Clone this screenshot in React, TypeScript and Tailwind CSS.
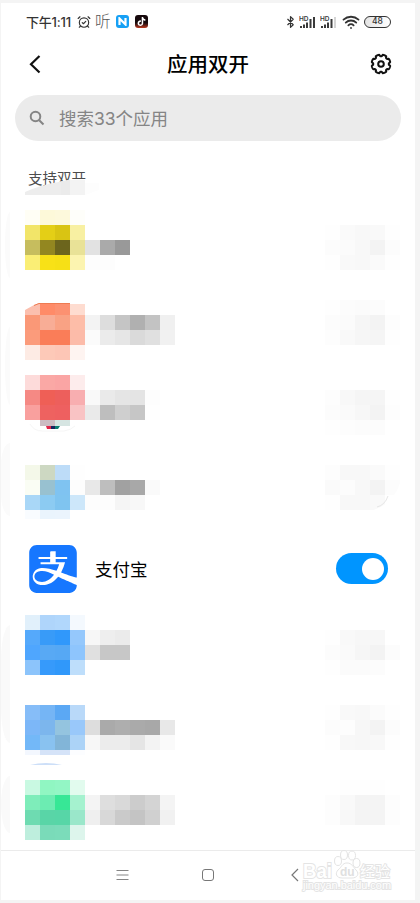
import { AlarmClockCheck, Bluetooth, Wifi } from 'lucide-react';
import { SiAlipay, SiTiktok } from 'react-icons/si';
import clsx from 'clsx';

interface AppRow {
  id: string;
  height: string;
  // one string per 15px band, one class per cell
  cells: string[];
  side: string[];
}

const NONE = 'bg-transparent bg-transparent bg-transparent bg-transparent bg-transparent';

const rowsBefore: AppRow[] = [
  {
    id: 'a',
    height: 'h-[90px]',
    cells: [
      'bg-[#fffef5] bg-[#fdf9d9] bg-[#fdf9dc] bg-[#fefefa]',
      'bg-[#f2e569] bg-[#e4cf16] bg-[#d9c413] bg-[#f8f0a2]',
      'bg-[#c6bd5e] bg-[#938720] bg-[#6c651d] bg-[#e9e297] bg-[#e2e2e2] bg-[#aaaaaa] bg-[#999999]',
      'bg-[#faee75] bg-[#f8e117] bg-[#f6e016] bg-[#fcf4b0] bg-[#fdfdfd] bg-[#fdfdfd]',
    ],
    side: [
      NONE,
      'bg-[#fefefe] bg-[#fafafa] bg-[#f8f8f8] bg-[#f9f9f9] bg-[#fefefe]',
      'bg-[#fcfcfc] bg-[#fbfbfb] bg-[#f8f8f8] bg-[#f3f3f3] bg-[#fcfcfc]',
      'bg-[#fefefe] bg-[#f9f9f9] bg-[#f8f8f8] bg-[#fafafa] bg-[#fefefe]',
    ],
  },
  {
    id: 'b',
    height: 'h-[75px]',
    cells: [
      'bg-[#fbbfae] bg-[#ff8b68] bg-[#fc9171] bg-[#fedcd0]',
      'bg-[#fa9877] bg-[#f8ad96] bg-[#f9a284] bg-[#fdbda8] bg-[#f3f3f3] bg-[#dddddd] bg-[#c5c5c5] bg-[#b0b0b0] bg-[#c3c3c3] bg-[#f0f0f0]',
      'bg-[#fb9b7b] bg-[#fa7d58] bg-[#fa7d58] bg-[#fcbba9] bg-[#fbfbfb] bg-[#ebebeb] bg-[#e6e6e6] bg-[#dadada] bg-[#e0e0e0] bg-[#f1f1f1]',
      'bg-[#fdebe4] bg-[#fdc9b8] bg-[#fdc6b6] bg-[#fef4f1]',
    ],
    side: [
      'bg-[#fefefe] bg-[#fcfcfc] bg-[#fbfbfb] bg-[#fcfcfc] bg-[#ffffff]',
      'bg-[#fcfcfc] bg-[#fbfbfb] bg-[#f6f6f6] bg-[#f3f3f3] bg-[#fdfdfd]',
      'bg-[#fdfdfd] bg-[#f9f9f9] bg-[#f6f6f6] bg-[#f5f5f5] bg-[#fefefe]',
    ],
  },
  {
    id: 'c',
    height: 'h-[90px]',
    cells: [
      'bg-[#fddbda] bg-[#faa8a5] bg-[#faa5a4] bg-[#fdecec]',
      'bg-[#f58984] bg-[#ef5f56] bg-[#ed5f5c] bg-[#f8aeb0] bg-[#f9f9f9] bg-[#eaeaea] bg-[#e5e5e5] bg-[#e4e4e4] bg-[#fdfdfd]',
      'bg-[#f9a09e] bg-[#ee6260] bg-[#ee6060] bg-[#f9c3c4] bg-[#eaeaea] bg-[#bebebe] bg-[#cfcfcf] bg-[#c6c6c6] bg-[#fefefe]',
      'bg-transparent bg-[#ccbcc3] bg-[#d6e5e2] bg-transparent',
    ],
    side: [
      NONE,
      'bg-[#fdfdfd] bg-[#f8f8f8] bg-[#f5f5f5] bg-[#f5f5f5] bg-[#fefefe]',
      'bg-[#fcfcfc] bg-[#fafafa] bg-[#f7f7f7] bg-[#f3f3f3] bg-[#fdfdfd]',
      'bg-[#fefefe] bg-[#fdfdfd] bg-[#fcfcfc] bg-[#fcfcfc] bg-[#ffffff]',
    ],
  },
  {
    id: 'd',
    height: 'h-[75px]',
    cells: [
      'bg-[#f4f8e9] bg-[#cdd8c2] bg-[#bddcf8] bg-[#fefefe]',
      'bg-[#fafdf4] bg-[#98c1d0] bg-[#7fc3f1] bg-[#fdfdfd] bg-[#e8e8e8] bg-[#bebebe] bg-[#a1a1a1] bg-[#a8a8a8] bg-[#fafafa]',
      'bg-[#a9d7f7] bg-[#8ccbf2] bg-[#7fc4f0] bg-[#cde7fa] bg-[#fdfdfd] bg-[#fdfdfd] bg-[#f5f5f5] bg-[#f8f8f8]',
      'bg-[#f9fcff] bg-[#eaf4fd] bg-[#ebf4fd] bg-transparent',
    ],
    side: [
      'bg-[#fdfdfd] bg-[#f8f8f8] bg-[#f8f8f8] bg-[#fafafa] bg-[#fefefe]',
      'bg-[#fafafa] bg-[#fcfcfc] bg-[#f8f8f8] bg-[#f3f3f3] bg-[#fcfcfc]',
      'bg-[#fefefe] bg-[#f8f8f8] bg-[#f8f8f8] bg-[#f9f9f9] bg-transparent',
    ],
  },
];

const rowsAfter: AppRow[] = [
  {
    id: 'e',
    height: 'h-[90px]',
    cells: [
      'bg-[#e1f0fb] bg-[#afd5fb] bg-[#b1d7fc] bg-[#f4f9fe]',
      'bg-[#55a9fb] bg-[#389bf8] bg-[#3098fb] bg-[#95c8fc] bg-[#f7f7f7] bg-[#eeeeee] bg-[#ebebeb]',
      'bg-[#4fa6fe] bg-[#58a9f4] bg-[#56a8f4] bg-[#8ec5fd] bg-[#e0e0e0] bg-[#c7c7c7] bg-[#c7c7c7]',
      'bg-[#8cc4fb] bg-[#369afb] bg-[#3098fa] bg-[#bedefb]',
    ],
    side: [
      NONE,
      'bg-[#fefefe] bg-[#f9f9f9] bg-[#f7f7f7] bg-[#f7f7f7] bg-[#ffffff]',
      'bg-[#fcfcfc] bg-[#fafafa] bg-[#f6f6f6] bg-[#f3f3f3] bg-[#fcfcfc]',
      'bg-[#fefefe] bg-[#fbfbfb] bg-[#fbfbfb] bg-[#fcfcfc] bg-[#ffffff]',
    ],
  },
  {
    id: 'f',
    height: 'h-[75px]',
    cells: [
      'bg-[#86bdf8] bg-[#75b5f5] bg-[#5ba8f4] bg-[#b9d9f9]',
      'bg-[#7cb7f8] bg-[#7cb6ed] bg-[#94c4df] bg-[#99c8fa] bg-[#dddddd] bg-[#aaaaaa] bg-[#aeaeae] bg-[#aaaaaa] bg-[#a8a8a8] bg-[#e8e8e8]',
      'bg-[#73b8f8] bg-[#89c2f0] bg-[#82b5d8] bg-[#acd3f7] bg-[#f7f7f7] bg-[#ececec] bg-[#ececec] bg-[#e5e5e5] bg-[#f3f3f3] bg-[#fafafa]',
      'bg-[#f3f7fe] bg-[#d5e3f8] bg-[#d5e3f8] bg-[#fcfdff]',
    ],
    side: [
      'bg-[#fefefe] bg-[#f9f9f9] bg-[#f8f8f8] bg-[#fbfbfb] bg-[#fefefe]',
      'bg-[#fcfcfc] bg-[#fdfdfd] bg-[#f7f7f7] bg-[#f3f3f3] bg-[#fcfcfc]',
      'bg-[#fefefe] bg-[#f8f8f8] bg-[#f7f7f7] bg-[#f8f8f8] bg-[#fefefe]',
    ],
  },
  {
    id: 'g',
    height: 'h-[70px]',
    cells: [
      'bg-[#c9f9e2] bg-[#90f6c2] bg-[#93f6c5] bg-[#e2fbee]',
      'bg-[#7eedba] bg-[#6cecb2] bg-[#37e796] bg-[#a5f2cf] bg-[#f4f4f4] bg-[#dedede] bg-[#d9d9d9] bg-[#cccccc] bg-[#d4d4d4] bg-[#f4f4f4]',
      'bg-[#6edbb1] bg-[#59d5a7] bg-[#57d6a7] bg-[#9ae7ca] bg-[#efefef] bg-[#d8d8d8] bg-[#cacaca] bg-[#c4c4c4] bg-[#d0d0d0] bg-[#f1f1f1]',
      'bg-[#beeedd] bg-[#7adbb9] bg-[#7bdcba] bg-[#ddf5ec]',
    ],
    side: [
      'bg-[#ffffff] bg-[#fefefe] bg-[#fefefe] bg-[#fefefe] bg-[#ffffff]',
      'bg-[#fdfdfd] bg-[#f9f9f9] bg-[#f4f4f4] bg-[#f4f4f4] bg-[#fdfdfd]',
      'bg-[#fdfdfd] bg-[#f8f8f8] bg-[#f4f4f4] bg-[#f4f4f4] bg-[#fdfdfd]',
    ],
  },
];

// The last band is shorter on a few rows
const lastBand: Record<string, string> = {
  c: 'h-1.5',
  d: 'h-[9px]',
  f: 'h-[5px]',
};

function Mosaic({ bands, last = 'h-[15px]' }: { bands: string[]; last?: string }) {
  return (
    <div className="flex flex-col">
      {bands.map((band, i) => (
        <div key={i} className={clsx('flex', i === 3 ? last : 'h-[15px]')}>
          {band.split(' ').map((cell, j) => (
            <div key={j} className={clsx('w-[15px]', cell)} />
          ))}
        </div>
      ))}
    </div>
  );
}

function MaskedRow({ row }: { row: AppRow }) {
  return (
    <li className={clsx('relative flex items-start justify-between pl-6 pr-[15px]', row.height)}>
      <Mosaic bands={row.cells} last={lastBand[row.id]} />
      <Mosaic bands={row.side} />
      {row.id === 'b' && (
        <svg className="absolute left-6 top-0" width="60" height="10" viewBox="0 0 60 10">
          <path d="M0 0H60V4H45V3H14L9 5L0 10Z" fill="#fff" />
          <path d="M9 5.5L14 3.5H45" fill="none" stroke="#ee7b52" strokeWidth="1" />
        </svg>
      )}
      {row.id === 'c' && (
        <svg className="absolute left-7 top-[45px]" width="48" height="14" viewBox="0 0 48 14">
          <path d="M1 4Q5 11 13 11H35Q42 10 46 6" fill="none" stroke="#f6f6f6" strokeWidth="1" />
          <path d="M17 6H22V9H18Z" fill="#e0264b" />
          <path d="M22 6H26V9H22Z" fill="#17235c" />
          <path d="M26 6H31L29 9H26Z" fill="#0b7c70" />
        </svg>
      )}
      {row.id === 'd' && (
        <svg className="absolute right-[15px] top-[18px]" width="75" height="28" viewBox="0 0 75 28">
          <path d="M75 0Q68 22 45 28H75Z" fill="#fff" />
          <path d="M52 24Q60 22 63 13" fill="none" stroke="#e6e6e6" strokeWidth="1" />
        </svg>
      )}
      {row.id === 'f' && (
        <svg className="absolute left-[29px] top-[57px]" width="32" height="4" viewBox="0 0 32 4">
          <path d="M0 3Q16 -1 32 3Z" fill="#cddff8" />
        </svg>
      )}
    </li>
  );
}

function Signal({ last }: { last: string }) {
  return (
    <svg width="17" height="14" viewBox="0 0 17 14" fill="#3a3a3a">
      <text x="0" y="5.500" fontSize="6.500" fontWeight="600" fontFamily="Inter, sans-serif">HD</text>
      <rect x="1" y="11" width="2" height="2" />
      <rect x="4" y="9.500" width="2" height="3.500" />
      <rect x="7" y="7.500" width="2" height="5.500" />
      <rect x="10.500" y="4" width="2" height="9" />
      <rect x="14" y="2" width="2" height="11" fill={last} />
    </svg>
  );
}

function StatusBar() {
  return (
    <div className="flex h-9 items-center justify-between pl-[25px] pr-6 pt-px text-[#333]">
      <div className="flex items-center">
        <span className="w-[51px] whitespace-nowrap pt-0.5 text-[13px] font-medium tracking-[-0.2px]">下午1:11</span>
        <AlarmClockCheck className="size-[14px]" strokeWidth={2} />
        <span className="ml-1 pt-px text-[15.5px] font-light leading-none text-[#555]">听</span>
        <span className="ml-[5px] flex size-[13px] items-center justify-center rounded-[3px] bg-[#16a0f5]">
          <svg width="9" height="9" viewBox="0 0 9 9" fill="none" stroke="#fff" strokeWidth="2.200">
            <path d="M1.500 8V1.500L7.500 7.500V1" />
          </svg>
        </span>
        <span className="ml-1.5 flex size-[13px] items-center justify-center rounded-[3px] bg-gradient-to-b from-[#16090c] from-60% to-[#c2381c]">
          <SiTiktok className="size-[9px] text-white" />
        </span>
      </div>
      <div className="flex items-center">
        <Bluetooth className="h-[14px] w-[13px]" strokeWidth={2.2} />
        <span className="ml-[2px]"><Signal last="#3a3a3a" /></span>
        <span className="ml-1"><Signal last="#d5d5d5" /></span>
        <Wifi className="ml-[5px] size-[18px]" strokeWidth={2.4} />
        <span className="ml-1 flex h-3 w-[27px] items-center justify-center rounded-full border border-[#333] bg-gradient-to-r from-[#e4e4e4] to-white text-[8.5px] font-medium leading-none">
          48
        </span>
      </div>
    </div>
  );
}

function GearIcon() {
  const steps = 160;
  const points = Array.from({ length: steps }, (_, i) => {
    const a = (i / steps) * Math.PI * 2;
    const r = 8.6 - 0.8 * Math.tanh(4 * (Math.cos(8 * a) - 0.4));
    return `${(11 + r * Math.cos(a)).toFixed(2)},${(11 + r * Math.sin(a)).toFixed(2)}`;
  });
  return (
    <svg width="22" height="22" viewBox="0 0 22 22" fill="none" stroke="#111" strokeWidth="2">
      <polygon points={points.join(' ')} strokeLinejoin="round" />
      <circle cx="11" cy="11" r="2.800" />
    </svg>
  );
}

function Header() {
  return (
    <header className="flex h-[50px] items-center justify-between pl-7 pr-[23px]">
      <svg width="12" height="20" viewBox="0 0 12 20" fill="none" stroke="#111" strokeWidth="2.2">
        <path d="M10.500 2L2 10.300L10.500 18.500" />
      </svg>
      <h1 className="ml-[5px] pt-[3px] text-[20.5px] font-medium leading-none text-black">应用双开</h1>
      <GearIcon />
    </header>
  );
}

function Watermark() {
  return (
    <svg className="absolute left-[300px] top-[-4px]" width="94" height="46" viewBox="0 0 94 46" fill="#fff" stroke="#e4e4e4" strokeWidth="1">
      <ellipse cx="37" cy="14" rx="3.500" ry="4.500" />
      <ellipse cx="43" cy="8" rx="3.500" ry="4.500" />
      <ellipse cx="51" cy="8.500" rx="3.500" ry="4.500" />
      <ellipse cx="55.500" cy="16" rx="3.500" ry="4.500" />
      <path d="M46 16C51 16 52 20 55 23C59 27 56 31 51 31H41C35 31 34 26 37 23C41 20 41 16 46 16Z" />
      <g fontFamily="Liberation Sans, sans-serif" paintOrder="stroke">
        <text x="2" y="30.500" fontSize="21" strokeWidth="2" fontWeight="700" textLength="29" lengthAdjust="spacingAndGlyphs">Bai</text>
        <text x="39" y="28.500" fontSize="12" fontWeight="700" fill="#e0e0e0" stroke="none">du</text>
        <text x="2" y="41.500" fontSize="10" fontWeight="400" strokeWidth="1.800" textLength="88" lengthAdjust="spacingAndGlyphs">jingyan.baidu.com</text>
      </g>
      <text x="59" y="29.500" fontSize="15" strokeWidth="1.800" paintOrder="stroke" fontWeight="400" fontFamily="Noto Sans CJK SC, sans-serif">经验</text>
    </svg>
  );
}

export default function App() {
  return (
    <div className="h-[903px] w-[420px] bg-[#f4f4f4] pl-px pt-[3px] font-[Inter,'Noto_Sans_CJK_SC',sans-serif]">
      <div className="relative flex h-[897px] w-[414px] flex-col overflow-hidden bg-white">
        <StatusBar />
        <Header />

        {/* Search */}
        <div className="ml-3.5 mt-1.5 flex h-[46px] w-[386px] items-center rounded-full bg-[#ebebeb] pl-[14px] text-[#858585]">
          <svg width="16" height="16" viewBox="0 0 16 16" fill="none" stroke="currentColor" strokeWidth="2">
            <circle cx="6.500" cy="6.500" r="4.800" />
            <path d="M10.200 10.200L14.500 14.500" />
          </svg>
          <span className="ml-3.5 pt-0.5 text-[17.5px]">搜索33个应用</span>
        </div>

        {/* Section title */}
        <div className="relative h-[69px] pl-[27px] pt-7">
          <h2 className="text-[14.5px] leading-5 text-[#4d4d4d]">支持双开</h2>
          <svg className="absolute left-6 top-[34px]" width="76" height="20" viewBox="0 0 76 20">
            <path d="M33 7L45 5L46 4H62V20H20V10Z" fill="#fff" />
            <path d="M0 20V17Q14 10.500 36 6.500V20Z" fill="#ededed" />
            <path d="M36 20V6.500L45 4.500V20Z" fill="#ebebeb" />
            <path d="M45 20V5H60V20Z" fill="#f3f3f3" />
            <path d="M60 8H74V15L60 20Z" fill="#fdfdfd" />
          </svg>
        </div>

        <ul>
          {rowsBefore.map((row) => (
            <MaskedRow key={row.id} row={row} />
          ))}
          <li className="flex h-[75px] items-start pl-7 pr-[27px] pt-[5px]">
            <SiAlipay className="size-12 text-[#1677ff]" />
            <span className="ml-[18px] flex h-12 items-center pt-0.5 text-[17.5px] text-black">支付宝</span>
            <button className="ml-auto mt-2 flex h-[31px] w-[52px] items-center justify-end rounded-full bg-[#0095ff] pr-1">
              <span className="size-[22px] rounded-full bg-white" />
            </button>
          </li>
          {rowsAfter.map((row) => (
            <MaskedRow key={row.id} row={row} />
          ))}
        </ul>

        {/* Navigation bar */}
        <nav className="relative h-[50px] border-t border-[#ebebeb]">
          <div className="flex h-12 items-center pl-[115px]">
            <svg width="13" height="12" viewBox="0 0 13 12" stroke="#858585">
              <path d="M0.500 1.500H12.500M0.500 6H12.500M0.500 10.500H12.500" />
            </svg>
            <svg className="ml-[73px]" width="12" height="12" viewBox="0 0 12 12" fill="none" stroke="#777">
              <rect x="0.500" y="0.500" width="11" height="11" rx="2.500" />
            </svg>
            <svg className="ml-[77px]" width="8" height="14" viewBox="0 0 8 14" fill="none" stroke="#777" strokeWidth="1.200">
              <path d="M7 1L1 7L7 13" />
            </svg>
          </div>
          <Watermark />
        </nav>

        {/* Smudges along the left edge */}
        <div className="absolute left-1 top-[209px] h-[66px] w-[5px] rounded-[100%_0_0_100%/50%_0_0_50%] bg-[#fbfbfb]" />
        <div className="absolute left-1 top-[324px] h-[78px] w-[5px] rounded-[100%_0_0_100%/50%_0_0_50%] bg-[#fbfbfb]" />
        <div className="absolute left-0 top-[440px] h-[73px] w-[9px] rounded-[100%_0_0_100%/30%_0_0_30%] bg-[#fbfbfb]" />
        <div className="absolute left-0 top-[622px] h-[118px] w-[9px] rounded-[100%_0_0_100%/30%_0_0_30%] bg-[#fafafa]" />
        <div className="absolute left-0 top-[773px] h-[57px] w-[9px] rounded-[100%_0_0_100%/50%_0_0_50%] bg-[#fafafa]" />
      </div>
    </div>
  );
}
